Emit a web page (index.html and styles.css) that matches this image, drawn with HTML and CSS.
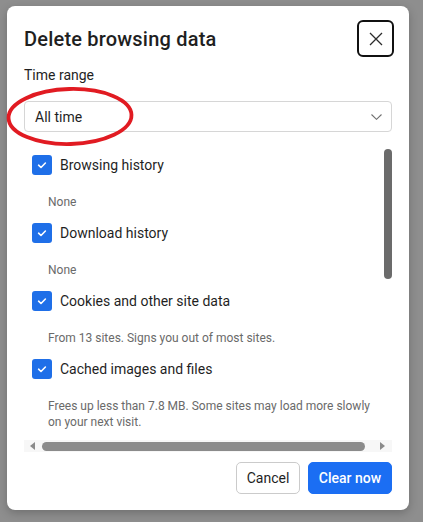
FILE: index.html
```html
<!DOCTYPE html>
<html lang="en">
<head>
<meta charset="utf-8">
<title>Delete browsing data</title>
<link rel="stylesheet" href="styles.css">
</head>
<body>
<div class="dialog">
  <div class="header">
    <h1 class="title">Delete browsing data</h1>
    <button class="close" aria-label="Close">
      <svg width="14" height="14" viewBox="0 0 14 14"><path d="M1 1L13 13M13 1L1 13" stroke="#2b2b2b" stroke-width="1.3" fill="none"/></svg>
    </button>
  </div>
  <div class="field-label">Time range</div>
  <div class="select">
    <span>All time</span>
    <svg width="11" height="6" viewBox="0 0 11 6"><path d="M0.5 0.5L5.5 5.3L10.5 0.5" stroke="#707070" stroke-width="1.1" fill="none"/></svg>
  </div>
  <div class="scroller">
    <div class="scroll-main">
      <div class="list">
        <div class="item">
          <div class="row"><span class="cb"><svg width="20" height="20" viewBox="0 0 20 20"><path d="M6.6 10.2L9 12.5L13.4 8" stroke="#fff" stroke-width="1.6" fill="none" stroke-linecap="round" stroke-linejoin="round"/></svg></span><span class="label">Browsing history</span></div>
          <div class="desc">None</div>
        </div>
        <div class="item">
          <div class="row"><span class="cb"><svg width="20" height="20" viewBox="0 0 20 20"><path d="M6.6 10.2L9 12.5L13.4 8" stroke="#fff" stroke-width="1.6" fill="none" stroke-linecap="round" stroke-linejoin="round"/></svg></span><span class="label">Download history</span></div>
          <div class="desc">None</div>
        </div>
        <div class="item">
          <div class="row"><span class="cb"><svg width="20" height="20" viewBox="0 0 20 20"><path d="M6.6 10.2L9 12.5L13.4 8" stroke="#fff" stroke-width="1.6" fill="none" stroke-linecap="round" stroke-linejoin="round"/></svg></span><span class="label">Cookies and other site data</span></div>
          <div class="desc">From 13 sites. Signs you out of most sites.</div>
        </div>
        <div class="item">
          <div class="row"><span class="cb"><svg width="20" height="20" viewBox="0 0 20 20"><path d="M6.6 10.2L9 12.5L13.4 8" stroke="#fff" stroke-width="1.6" fill="none" stroke-linecap="round" stroke-linejoin="round"/></svg></span><span class="label">Cached images and files</span></div>
          <div class="desc">Frees up less than 7.8 MB. Some sites may load more slowly on your next visit.</div>
        </div>
      </div>
      <div class="vbar"><div class="vthumb"></div></div>
    </div>
    <div class="hbar">
      <span class="arrow-left"></span>
      <div class="hthumb"></div>
      <span class="arrow-right"></span>
    </div>
  </div>
  <div class="actions">
    <button class="btn cancel">Cancel</button>
    <button class="btn primary">Clear now</button>
  </div>
  <svg class="annotation" width="132" height="66" viewBox="0 0 132 66">
    <ellipse cx="64" cy="31.5" rx="61.5" ry="27.5" transform="rotate(-1.5 64 31.5)" fill="none" stroke="#e11b22" stroke-width="3.8"/>
  </svg>
</div>
</body>
</html>
```

FILE: styles.css
```css
* { box-sizing: border-box; }

html, body {
  margin: 0;
  padding: 0;
}

body {
  background: #8e8e8e;
  width: 423px;
  height: 522px;
  overflow: hidden;
  font-family: Roboto, "Liberation Sans", sans-serif;
  color: #1f1f1f;
}

.dialog {
  position: relative;
  margin: 6px 0 0 7px;
  width: 402px;
  height: 504px;
  background: #fff;
  border-radius: 8px;
  box-shadow: 0 3px 10px rgba(0, 0, 0, 0.22);
  padding: 14px 15px 0 17px;
  display: flex;
  flex-direction: column;
}

.header {
  height: 37px;
  display: flex;
  align-items: center;
  justify-content: space-between;
}

.title {
  margin: 0;
  font-size: 20px;
  line-height: 24px;
  font-weight: 500;
  letter-spacing: 0.2px;
  color: #1f1f1f;
}

.close {
  width: 37px;
  height: 37px;
  border: 2px solid #111;
  border-radius: 6px;
  background: #fff;
  padding: 0;
  display: flex;
  align-items: center;
  justify-content: center;
}

.field-label {
  margin-top: 8px;
  font-size: 14px;
  line-height: 20px;
}

.select {
  margin-top: 16px;
  margin-right: 2px;
  height: 31px;
  border: 1px solid #d6d6d6;
  border-radius: 4px;
  padding: 0 9px 0 10px;
  display: flex;
  align-items: center;
  justify-content: space-between;
  font-size: 14px;
}

.scroller {
  margin-top: 9px;
  margin-right: 2px;
}

.scroll-main {
  height: 299px;
  display: flex;
}

.list {
  flex: 1;
  overflow: hidden;
  padding: 14px 0 0 8px;
}

.row {
  height: 20px;
  display: flex;
  align-items: center;
  gap: 8px;
}

.cb {
  width: 20px;
  height: 20px;
  border-radius: 3px;
  background: #1f6fe8;
  display: block;
  flex: none;
}

.cb svg { display: block; }

.label {
  font-size: 14px;
  line-height: 20px;
}

.desc {
  margin: 19px 0 13px 16px;
  max-width: 322px;
  font-size: 12px;
  line-height: 16px;
  color: #6a6a6a;
}

.vbar {
  width: 8px;
  flex: none;
}

.vthumb {
  margin-top: 8px;
  height: 130px;
  background: #6b6b6b;
  border-radius: 4px;
}

.hbar {
  height: 12px;
  display: flex;
  align-items: center;
  background: #f7f7f7;
  padding: 0 6px;
}

.arrow-left, .arrow-right {
  width: 0;
  height: 0;
  border-top: 4px solid transparent;
  border-bottom: 4px solid transparent;
  flex: none;
}

.arrow-left {
  border-right: 5px solid #8a8a8a;
  margin-right: 7px;
}

.arrow-right {
  border-left: 5px solid #8a8a8a;
  margin-left: 15px;
}

.hthumb {
  width: 323px;
  height: 9px;
  border-radius: 4.5px;
  background: #8b8b8b;
}

.actions {
  margin-top: 10px;
  margin-right: 2px;
  display: flex;
  justify-content: flex-end;
  gap: 8px;
}

.btn {
  height: 32px;
  padding: 0;
  border-radius: 5px;
  border: 1px solid #cbcbcb;
  background: #fff;
  font-family: Roboto, "Liberation Sans", sans-serif;
  font-size: 14px;
  color: #1f1f1f;
}

.btn.cancel {
  width: 64px;
}

.btn.primary {
  width: 84px;
  background: #1b6ef3;
  border-color: #1b6ef3;
  color: #fff;
  font-weight: 500;
}

.annotation {
  position: absolute;
  left: -1px;
  top: 79px;
  overflow: visible;
}
```
